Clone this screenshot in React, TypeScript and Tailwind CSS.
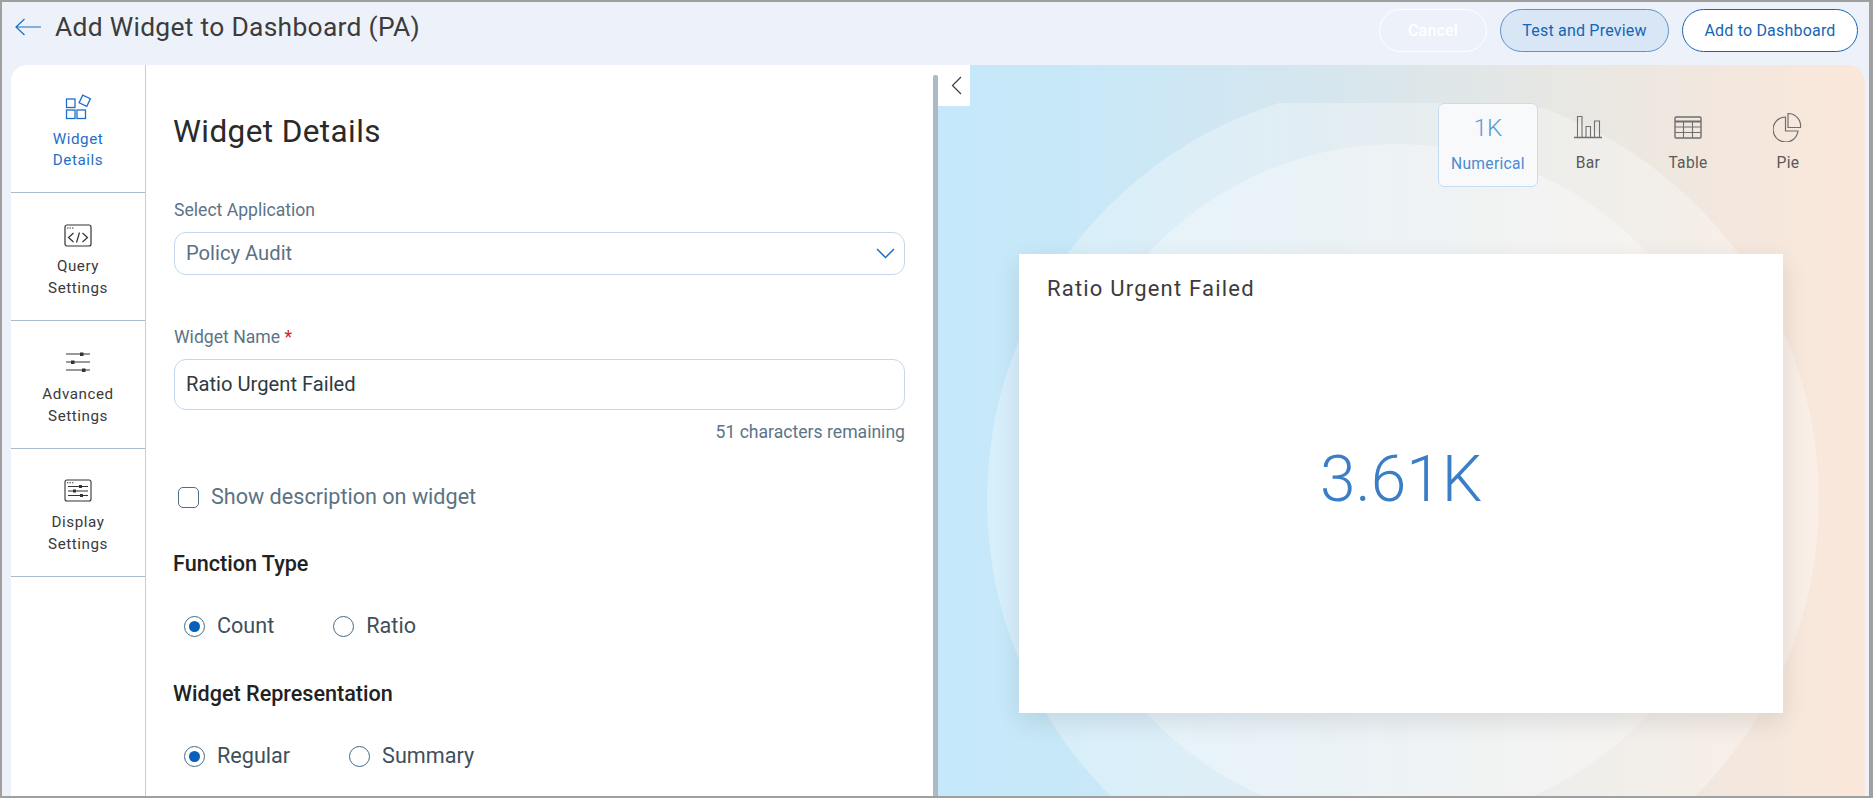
import React from "react";

const font = { fontFamily: "Roboto, sans-serif" };

function Radio({ on }: { on?: boolean }) {
  return (
    <span className="w-[21px] h-[21px] rounded-full border border-[#3e6b8c] flex items-center justify-center shrink-0 bg-white">
      {on && <span className="w-[11px] h-[11px] rounded-full bg-[#0a5fbb]" />}
    </span>
  );
}

function RadioRow({ a, b, bLeft }: { a: string; b: string; bLeft: string }) {
  return (
    <div className="flex items-center pl-[10px] text-[21.6px] leading-[24px] text-[#3f4f5b]">
      <Radio on />
      <span className="ml-[12px]">{a}</span>
      <span className={`flex items-center ${bLeft}`}>
        <Radio />
        <span className="ml-[12px]">{b}</span>
      </span>
    </div>
  );
}

function SideItem({ icon, l1, l2, active, iconShift }: { icon: React.ReactNode; l1: string; l2: string; active?: boolean; iconShift?: string }) {
  return (
    <div className="h-[128px] border-b border-[#a9bccb] flex flex-col items-center pt-[30px] shrink-0">
      <div className={`h-[25px] flex items-center justify-center ${iconShift ?? ""}`}>{icon}</div>
      <div className={`text-[15.2px] tracking-[0.55px] text-center ${active ? "mt-[9px] leading-[20.5px] text-[#1e6fc8]" : "mt-[8px] leading-[21.5px] text-[#3a3a3a]"}`}>
        {l1}
        <br />
        {l2}
      </div>
    </div>
  );
}

function ChartTab({ icon, label }: { icon: React.ReactNode; label: string }) {
  return (
    <div className="w-[100px] h-[84px] flex flex-col items-center pt-[9px] text-[15.6px] leading-[20px] tracking-[0.3px] text-[#5a5a5a]">
      <div className="h-[30px] flex items-center justify-center">{icon}</div>
      <div className="mt-[11px]">{label}</div>
    </div>
  );
}

export default function App() {
  return (
    <div style={font} className="w-[1873px] h-[798px] border-2 border-r-4 border-[#a0a0a0] bg-[#edf2fa] flex flex-col overflow-hidden">
      <header className="h-[63px] shrink-0 flex items-start">
        <svg width="26" height="18" viewBox="0 0 26 18" className="ml-[13px] mt-[16px]" fill="none" stroke="#1a6fc4" strokeWidth="1.2">
          <path d="M1 9H26M9.5 1L1 9L9.5 17" />
        </svg>
        <h1 className="ml-[14px] mt-[7px] text-[26.4px] leading-[36px] font-normal tracking-[0.3px] text-[#3c3c3c]">Add Widget to Dashboard (PA)</h1>
        <div className="ml-auto mr-[11px] mt-[7px] flex gap-[13px] text-[16px] tracking-[0.2px]">
          <button className="w-[108px] h-[43px] rounded-full border border-white text-white font-medium">Cancel</button>
          <button className="w-[169px] h-[43px] rounded-full border border-[#5b93cf] bg-[#d8e6f5] text-[#1565b5]">Test and Preview</button>
          <button className="w-[176px] h-[43px] rounded-full border border-[#1565b5] bg-white text-[#1565b5]">Add to Dashboard</button>
        </div>
      </header>

      <div className="flex-1 min-h-0 flex pl-[9px] pr-[4px]">
        <aside className="w-[135px] shrink-0 bg-white rounded-tl-[16px] border-r border-[#c9cdd0] flex flex-col">
          <SideItem
            active
            l1="Widget"
            l2="Details"
            icon={
              <svg width="27" height="27" viewBox="0 0 27 27" fill="none" stroke="#1e6fc8" strokeWidth="1.3">
                <rect x="1.5" y="5" width="8.5" height="8.5" />
                <rect x="1.5" y="16" width="8.5" height="8.5" />
                <rect x="12" y="16" width="8.5" height="8.5" />
                <rect x="15.5" y="2.5" width="8.5" height="8.5" transform="rotate(25 19.75 6.75)" />
              </svg>
            }
          />
          <SideItem
            l1="Query"
            l2="Settings"
            icon={
              <svg width="28" height="23" viewBox="0 0 28 23" fill="none" stroke="#333" strokeWidth="1.2">
                <rect x="1" y="1" width="26" height="21" rx="2" />
                <path d="M3 4H4.4M5.5 4H6.9M8 4H9.4" />
                <path d="M9.5 9L4.5 13.5L9.5 18M18.5 9L23.5 13.5L18.5 18M15.5 8.5L12.5 18.5" />
              </svg>
            }
          />
          <SideItem
            l1="Advanced"
            l2="Settings"
            iconShift="-translate-y-[2px]"
            icon={
              <svg width="26" height="22" viewBox="0 0 26 22" fill="none" stroke="#333" strokeWidth="1">
                <path d="M1 3H25M1 11H25M1 19H25" />
                <rect x="15" y="1.5" width="3.5" height="3.5" fill="#333" stroke="none" />
                <rect x="6" y="9.5" width="3.5" height="3.5" fill="#333" stroke="none" />
                <rect x="17" y="17.5" width="3.5" height="3.5" fill="#333" stroke="none" />
              </svg>
            }
          />
          <SideItem
            l1="Display"
            l2="Settings"
            iconShift="-translate-y-[1px]"
            icon={
              <svg width="28" height="23" viewBox="0 0 28 23" fill="none" stroke="#333" strokeWidth="1.1">
                <rect x="1" y="1" width="26" height="21" rx="2" />
                <path d="M3 3.7H4.4M5.5 3.7H6.9M8 3.7H9.4" />
                <path d="M4 7.5H24M4 12H24M4 16.5H24" />
                <rect x="15" y="6" width="3" height="3" fill="#333" stroke="none" />
                <rect x="9" y="10.5" width="3" height="3" fill="#333" stroke="none" />
                <rect x="16" y="15" width="3" height="3" fill="#333" stroke="none" />
              </svg>
            }
          />
        </aside>

        <main className="w-[787px] shrink-0 bg-white pl-[28px] pr-[28px] overflow-hidden">
          <h2 className="mt-[49px] ml-[-1px] text-[31.5px] leading-[36px] font-normal tracking-[0.4px] text-[#2a2a2a]">Widget Details</h2>
          <label className="block mt-[50px] text-[17.6px] leading-[20px] text-[#5c7486]">Select Application</label>
          <div className="mt-[12px] h-[43px] rounded-[12px] border border-[#c3d8ee] flex items-center justify-between pl-[11px] pr-[9px] text-[20.2px] text-[#5b7283]">
            <span>Policy Audit</span>
            <svg width="19" height="11" viewBox="0 0 19 11" fill="none" stroke="#1e6fc8" strokeWidth="1.5">
              <path d="M1 1L9.5 9.5L18 1" />
            </svg>
          </div>
          <label className="block mt-[52px] text-[17.6px] leading-[20px] text-[#5c7486]">
            Widget Name <span className="text-[#e02020]">*</span>
          </label>
          <div className="mt-[12px] h-[51px] rounded-[12px] border border-[#c3d8ee] flex items-center pl-[11px] text-[20.2px] text-[#2f3a42]">Ratio Urgent Failed</div>
          <div className="mt-[12px] text-right text-[17.6px] leading-[20px] text-[#5c7486]">51 characters remaining</div>
          <div className="mt-[43px] flex items-center pl-[4px] text-[21.6px] leading-[24px] text-[#5b7283]">
            <span className="w-[21px] h-[21px] rounded-[5px] border border-[#4d6f80] mr-[12px]" />
            Show description on widget
          </div>
          <h3 className="mt-[41px] ml-[-1px] text-[21.6px] leading-[28px] font-medium text-[#222]">Function Type</h3>
          <div className="mt-[36px]">
            <RadioRow a="Count" b="Ratio" bLeft="ml-[59px]" />
          </div>
          <h3 className="mt-[42px] ml-[-1px] text-[21.6px] leading-[28px] font-medium text-[#222]">Widget Representation</h3>
          <div className="mt-[36px]">
            <RadioRow a="Regular" b="Summary" bLeft="ml-[59px]" />
          </div>
        </main>

        <div className="w-[5px] shrink-0 bg-white">
          <div className="mt-[10px] h-full bg-[#abbbc5] rounded-t-[2px]" />
        </div>

        <section className="relative flex-1 min-w-0 rounded-tr-[18px] overflow-hidden bg-[linear-gradient(90deg,#c5e8fb_0%,#c8e8f8_15%,#d6e6ee_42%,#e6e7e4_65%,#f3e7de_85%,#fbe7da_100%)]">
          <div className="absolute inset-x-0 top-[38px] bottom-0 overflow-hidden">
            <div className="absolute left-[49px] top-[-19px] w-[832px] h-[832px] rounded-full bg-white/30" />
          </div>
          <div className="absolute left-[120px] top-[79px] w-[680px] h-[680px] rounded-full bg-white/30" />
          <button className="absolute left-0 top-0 w-[32px] h-[41px] bg-white flex items-center justify-center pl-[4px]">
            <svg width="11" height="19" viewBox="0 0 11 19" fill="none" stroke="#3a3a3a" strokeWidth="1.2">
              <path d="M10 1L1.5 9.5L10 18" />
            </svg>
          </button>

          <div className="absolute right-[27px] top-[38px] flex">
            <div className="w-[100px] h-[84px] rounded-[6px] border border-[#c5dcf2] bg-[#f8f9fa] flex flex-col items-center pt-[9px]">
              <div className="h-[30px] flex items-center text-[24px] font-light text-[#5c9bd6]">1K</div>
              <div className="mt-[11px] text-[15.6px] leading-[20px] tracking-[0.3px] text-[#4a8bd0]">Numerical</div>
            </div>
            <ChartTab
              label="Bar"
              icon={
                <svg width="28" height="24" viewBox="0 0 28 24" fill="none" stroke="#6f6f6f" strokeWidth="1.1">
                  <path d="M0 22.5H28" strokeWidth="1.4" />
                  <path d="M3.5 22V1.5H8V22M12 22V11.5H16.5V22M20.5 22V6H25.5V22" />
                </svg>
              }
            />
            <ChartTab
              label="Table"
              icon={
                <svg width="28" height="23" viewBox="0 0 28 23" fill="none" stroke="#6f6f6f" strokeWidth="1.1">
                  <rect x="1" y="1" width="26" height="21" rx="1" strokeWidth="1.4" />
                  <path d="M1 5.5H27" strokeWidth="1.8" />
                  <path d="M1 11H27M1 16.5H27M9.5 6V22M18.5 6V22" />
                </svg>
              }
            />
            <ChartTab
              label="Pie"
              icon={
                <svg width="30" height="30" viewBox="0 0 30 30" fill="none" stroke="#6f6f6f" strokeWidth="1.2">
                  <path d="M12.5 5A12.5 12.5 0 1 0 25 19H12.5Z" />
                  <path d="M15 1.5A12.5 12.5 0 0 1 27.5 15.5H15Z" />
                </svg>
              }
            />
          </div>

          <div className="absolute left-[81px] top-[189px] w-[764px] h-[459px] bg-white shadow-[0_8px_24px_rgba(0,0,0,0.1)] flex flex-col">
            <div className="ml-[28px] mt-[21px] text-[22px] leading-[28px] tracking-[1.2px] text-[#3c3c3c]">Ratio Urgent Failed</div>
            <div className="flex-1 flex items-center justify-center mt-[-56px] text-[64px] font-light text-[#3a7fc6]">3.61K</div>
          </div>
        </section>
      </div>
    </div>
  );
}
